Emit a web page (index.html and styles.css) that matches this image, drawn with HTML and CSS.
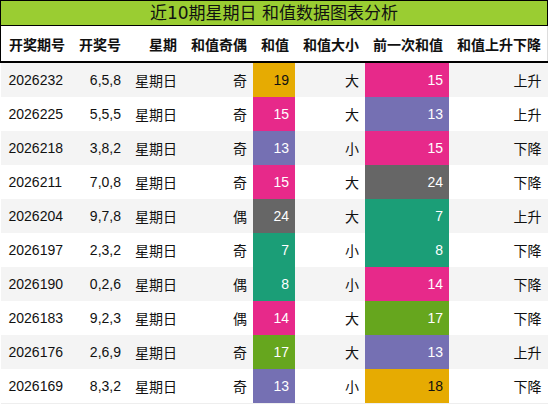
FILE: index.html
```html
<!DOCTYPE html>
<html lang="zh">
  <head>
    <meta charset="UTF-8" />
    <title>近10期星期日 和值数据图表分析</title>
    <link rel="stylesheet" href="styles.css">
  </head>
  <body>
    <div class="wrap">
      <div class="title">近10期星期日 和值数据图表分析</div>
      <table class="data">
        <thead>
          <tr>
            <th class="first">开奖期号</th>
            <th>开奖号</th>
            <th>星期</th>
            <th>和值奇偶</th>
            <th>和值</th>
            <th>和值大小</th>
            <th>前一次和值</th>
            <th>和值上升下降</th>
          </tr>
        </thead>
        <tbody>
          <tr><td class="first">2026232</td><td>6,5,8</td><td>星期日</td><td>奇</td><td class="c-gold">19</td><td>大</td><td class="c-pink">15</td><td>上升</td></tr>
          <tr><td class="first">2026225</td><td>5,5,5</td><td>星期日</td><td>奇</td><td class="c-pink">15</td><td>大</td><td class="c-purple">13</td><td>上升</td></tr>
          <tr><td class="first">2026218</td><td>3,8,2</td><td>星期日</td><td>奇</td><td class="c-purple">13</td><td>小</td><td class="c-pink">15</td><td>下降</td></tr>
          <tr><td class="first">2026211</td><td>7,0,8</td><td>星期日</td><td>奇</td><td class="c-pink">15</td><td>大</td><td class="c-gray">24</td><td>下降</td></tr>
          <tr><td class="first">2026204</td><td>9,7,8</td><td>星期日</td><td>偶</td><td class="c-gray">24</td><td>大</td><td class="c-teal">7</td><td>上升</td></tr>
          <tr><td class="first">2026197</td><td>2,3,2</td><td>星期日</td><td>奇</td><td class="c-teal">7</td><td>小</td><td class="c-teal">8</td><td>下降</td></tr>
          <tr><td class="first">2026190</td><td>0,2,6</td><td>星期日</td><td>偶</td><td class="c-teal">8</td><td>小</td><td class="c-pink">14</td><td>下降</td></tr>
          <tr><td class="first">2026183</td><td>9,2,3</td><td>星期日</td><td>偶</td><td class="c-pink">14</td><td>大</td><td class="c-green">17</td><td>下降</td></tr>
          <tr><td class="first">2026176</td><td>2,6,9</td><td>星期日</td><td>奇</td><td class="c-green">17</td><td>大</td><td class="c-purple">13</td><td>上升</td></tr>
          <tr><td class="first">2026169</td><td>8,3,2</td><td>星期日</td><td>奇</td><td class="c-purple">13</td><td>小</td><td class="c-gold">18</td><td>下降</td></tr>
        </tbody>
      </table>
    </div>
  </body>
</html>
```

FILE: styles.css
```css
body {
  margin: 0;
  background: #fff;
  font-family: "Liberation Sans", "Noto Sans CJK SC", sans-serif;
  color: #111;
}

.wrap {
  width: 548px;
}

.title {
  height: 24px;
  line-height: 24px;
  border: 1px solid #000;
  background: #9acd32;
  text-align: center;
  font-size: 17px;
  font-family: "DejaVu Sans", "Noto Sans CJK SC", sans-serif;
  color: #111;
}

.data {
  width: 548px;
  border-collapse: collapse;
  font-size: 14px;
}

.data th {
  height: 35px;
  padding: 0 6px 0 8px;
  font-weight: bold;
  text-align: right;
  white-space: nowrap;
  border-bottom: 2px solid #000;
}

.data thead tr {
  border-left: 1px solid #000;
  border-right: 1px solid #ddd;
}

.data td {
  height: 34px;
  padding: 0 6px 0 8px;
  text-align: right;
  white-space: nowrap;
}

.data .first {
  text-align: left;
}

.data tbody tr:nth-child(odd) {
  background: #f4f4f4;
}

.data tbody tr:last-child {
  border-bottom: 1px solid #eee;
}

.c-gold {
  background: #e6ab02;
  color: #111;
}

.c-pink {
  background: #e7298a;
  color: #fff;
}

.c-purple {
  background: #7570b3;
  color: #fff;
}

.c-gray {
  background: #666666;
  color: #fff;
}

.c-teal {
  background: #1b9e77;
  color: #fff;
}

.c-green {
  background: #66a61e;
  color: #fff;
}
```
